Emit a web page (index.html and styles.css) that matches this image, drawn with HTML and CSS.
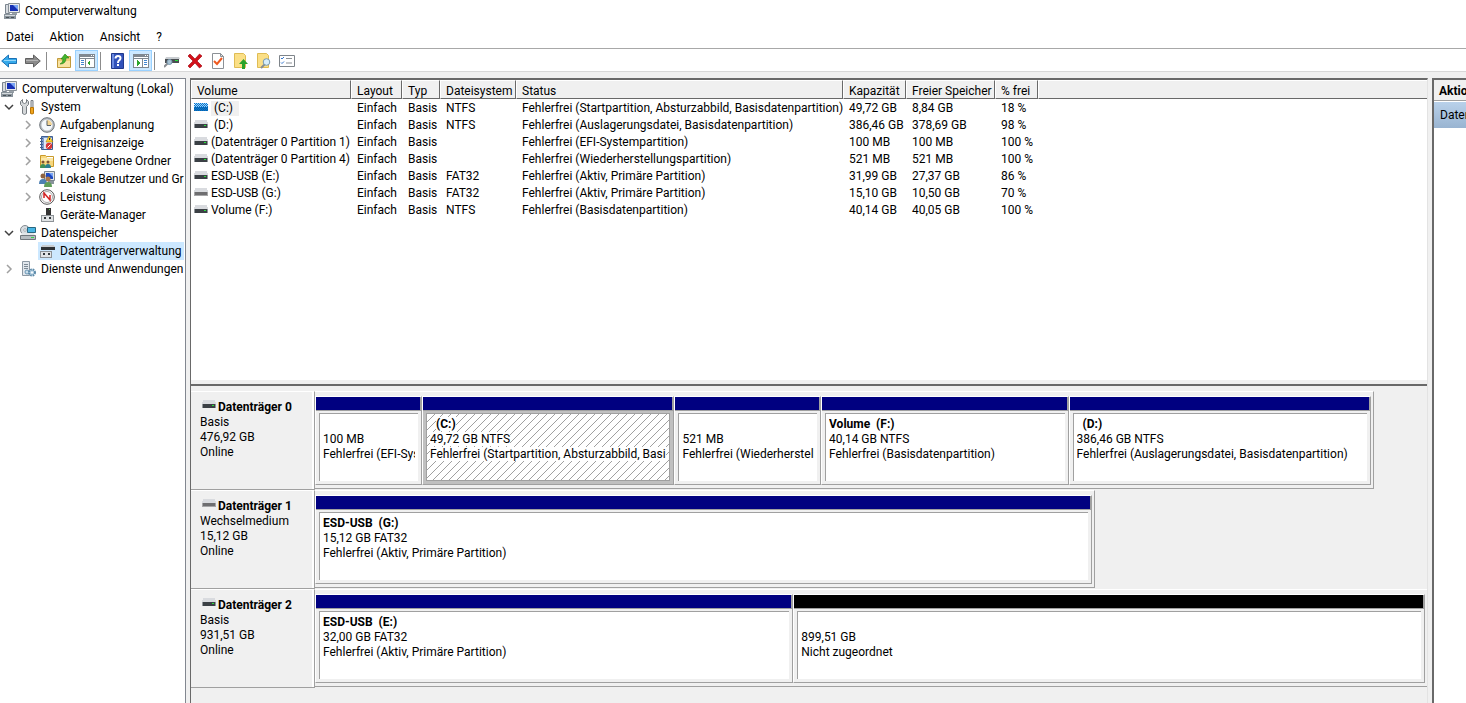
FILE: index.html
```html
<!DOCTYPE html>
<html lang="de">
<head>
  <title>Computerverwaltung</title>
  <meta charset="utf-8">
  <meta name="viewport" content="width=device-width, initial-scale=1">
  <link rel="stylesheet" href="styles.css">
</head>
<body>
  <svg class="sprite" xmlns="http://www.w3.org/2000/svg" aria-hidden="true">
    <symbol id="computer" viewBox="0 0 16 16">
      <path fill="#d7dbe0" stroke="#7b858f" d="M1.500 1.500h4v9h-4z"/>
      <path fill="#e8eaed" stroke="#8a9299" d="M4.500 .5h11v9h-11z"/>
      <path fill="#1730b4" d="M6 2h8v6H6z"/>
      <path fill="#7aa5f5" d="M9 2h5v5z"/>
      <path fill="#9aa2aa" d="M8 10h5v2H8z"/>
      <path fill="#8a949c" d="M0 11h12v5H0z"/>
      <path fill="#d5dadd" d="M1 12h10v1H1z"/>
      <path fill="#4a5258" d="M2 14h3v1H2zM7 14h3v1H7z"/>
    </symbol>
    <symbol id="tools" viewBox="0 0 16 16">
      <path fill="#d5d8da" stroke="#777d82" d="M2.500 .5v3l2 1 2-1v-3l2 2v3l-2 2v7q-2 2-4 0v-7l-2-2v-3z"/>
      <path fill="#e2e4e6" stroke="#777d82" d="M11 1.500h2v7h-2z"/>
      <path fill="#f0a51c" stroke="#b87406" d="M10.500 8.500h3v6q-1.500 1-3 0z"/>
    </symbol>
    <symbol id="clock" viewBox="0 0 16 16">
      <circle cx="8" cy="8" r="7.300" fill="#b9bec3" stroke="#6d747a"/>
      <circle cx="8" cy="8" r="5.500" fill="#f4f8fc"/>
      <path fill="#f3d493" d="M8 8V3a5 5 0 0 1 5 5z"/>
      <path fill="none" stroke="#5b6268" d="M8 3.500V8.500h4"/>
    </symbol>
    <symbol id="events" viewBox="0 0 16 16">
      <path fill="#7f9fd0" stroke="#405f92" d="M2.500 1.500h11v13h-11z"/>
      <path fill="#dfe9f7" d="M5 3h8v11H5z"/>
      <path stroke="#405f92" d="M1 3.500h3M1 6.500h3M1 9.500h3M1 12.500h3"/>
      <path fill="#ffd42e" stroke="#a98100" stroke-width=".6" d="m10 1 4 6H7z"/>
      <path stroke="#333" d="M10.500 3v2"/>
      <circle cx="10" cy="11" r="3.200" fill="#d93636"/>
      <path stroke="#fff" d="m8.500 12.500 3-3"/>
    </symbol>
    <symbol id="shared" viewBox="0 0 16 16">
      <path fill="#f7d77c" stroke="#c99a2a" d="M1.500 2.500h5l1 1h7v10h-13z"/>
      <path fill="#fbe7a8" d="M2 5h12v3H2z"/>
      <path fill="#fff" d="M8 4h6v1H8z"/>
      <circle cx="4" cy="9" r="1.500" fill="#7a5236"/>
      <circle cx="9" cy="9" r="1.500" fill="#7a5236"/>
      <path fill="#3f8f57" d="M1 15q0-4 3-4t3 4z"/>
      <path fill="#2b7f91" d="M6 15q0-4 3-4t3 4z"/>
    </symbol>
    <symbol id="users" viewBox="0 0 16 16">
      <path fill="#dfe3e8" stroke="#79838d" d="M5.500 .5h10v9h-10z"/>
      <path fill="#1c49c2" d="M7 2h7v6H7z"/>
      <path fill="#7aa5f5" d="M10 2h4v4z"/>
      <path fill="#8a949c" d="M9 10h6v3H9z"/>
      <circle cx="4" cy="5" r="2.500" fill="#8f633f"/>
      <circle cx="9" cy="8" r="2.500" fill="#a9774d"/>
      <path fill="#4d80b3" d="M0 13q0-5 4-5t4 5z"/>
      <path fill="#5f9e58" d="M5 16q0-5 4-5t4 5z"/>
    </symbol>
    <symbol id="gauge" viewBox="0 0 16 16">
      <circle cx="8" cy="8" r="7.300" fill="#fff" stroke="#555"/>
      <circle cx="8" cy="8" r="5.500" fill="none" stroke="#aaa"/>
      <path fill="none" stroke="#d32222" stroke-width="1.500" d="M5 9V4l6 7V6"/>
    </symbol>
    <symbol id="device" viewBox="0 0 16 16" shape-rendering="crispEdges">
      <path fill="#333" d="M7 1h5v8H7z"/>
      <path fill="#51d24a" d="M10 2h1v1h-1z"/>
      <path fill="#8d9297" d="M2 8h13v7H2z"/>
      <path fill="#dfe2e4" d="M3 9h11v5H3z"/>
      <path fill="#33383c" d="M5 10h2v2H5zM10 10h2v2h-2z"/>
    </symbol>
    <symbol id="storage" viewBox="0 0 16 16">
      <circle cx="5" cy="5" r="4.500" fill="#d8dde2" stroke="#82898f"/>
      <circle cx="5" cy="5" r="1.300" fill="#fff" stroke="#82898f" stroke-width=".6"/>
      <path fill="#48b5e4" stroke="#29677f" d="M7.500 2.500h8v5h-8z"/>
      <path fill="#e2e6e9" d="M2 8h12l1 3H1z"/>
      <path fill="#b6bcc1" stroke="#70777d" d="M.5 10.500h15v4H.5z"/>
      <path fill="#35d54a" d="M11 12h3v1h-3z"/>
    </symbol>
    <symbol id="diskmgmt" viewBox="0 0 16 16" shape-rendering="crispEdges">
      <path fill="#c9cdd0" d="M3 2h12l1 2H2z"/>
      <path fill="#2e3235" d="M2 4h14v3H2z"/>
      <path fill="#8d9297" d="M1 8h12v7H1z"/>
      <path fill="#e2e4e6" d="M2 9h10v5H2z"/>
      <path fill="#33383c" d="M4 10h2v2H4zM9 10h2v2H9z"/>
    </symbol>
    <symbol id="services" viewBox="0 0 16 16">
      <path fill="#e1e7ed" stroke="#8c98a3" d="M2.500 .5h7v14h-7z"/>
      <path stroke="#7c8994" d="M4 3.500h4M4 5.500h4M4 7.500h4"/>
      <circle cx="7" cy="11" r="2" fill="#c9ddea" stroke="#6c98b6"/>
      <circle cx="12" cy="11.500" r="3" fill="#b7d2e4" stroke="#5c8aa9" stroke-width="2" stroke-dasharray="1.600 .8"/>
      <circle cx="12" cy="11.500" r="1" fill="#fff"/>
    </symbol>
    <symbol id="drive" viewBox="0 0 14 8" shape-rendering="crispEdges">
      <path fill="#d9dbdf" d="M1 0h12l1 4H0z"/>
      <path fill="#3b4045" d="M0 4h14v4H0z"/>
      <path fill="#92979b" d="M0 4h1v4H0zM13 4h1v4h-1z"/>
      <path fill="#27e33a" d="M10 5h2v1h-2z"/>
    </symbol>
    <symbol id="drive-usb" viewBox="0 0 14 8" shape-rendering="crispEdges">
      <path fill="#d9dbdf" d="M1 0h12l1 4H0z"/>
      <path fill="#6e6e70" d="M0 4h14v4H0z"/>
      <path fill="#a5a5a7" d="M0 4h1v4H0zM13 4h1v4h-1zM0 7h14v1H0z"/>
    </symbol>
    <symbol id="drive-active" viewBox="0 0 14 8" shape-rendering="crispEdges">
      <path fill="#a4d0f0" d="M1 0h12l1 4H0z"/>
      <path fill="#12609f" d="M0 4h14v4H0z"/>
      <path stroke="#0078d7" stroke-dasharray="1 1" d="M0 .5h14M1 1.500h13M0 2.500h14M1 3.500h13M0 4.500h14M1 5.500h13M0 6.500h14M1 7.500h13"/>
    </symbol>
    <symbol id="back" viewBox="0 0 16 16">
      <path fill="#35a9ea" stroke="#1b71b5" d="M.7 8 7.500 2v3.500h8v5h-8V14z"/>
      <path stroke="#94d6fa" d="M3 7.500h12"/>
    </symbol>
    <symbol id="forward" viewBox="0 0 16 16">
      <path fill="#8b8b8b" stroke="#606060" d="M15.300 8 8.500 2v3.500h-8v5h8V14z"/>
      <path stroke="#b5b5b5" d="M1 7.500h12"/>
    </symbol>
    <symbol id="folder-up" viewBox="0 0 16 16">
      <path fill="#efcf78" stroke="#c19a3c" d="M1.500 5.500h6l1-2h6v11h-13z"/>
      <path fill="#f9e3a1" d="M2 8h12v6H2z"/>
      <path fill="#45b52d" stroke="#238014" stroke-width=".6" d="M4 11q3-1 3-5H5l4-5 4 4h-3q0 6-6 6z"/>
    </symbol>
    <symbol id="window-left" viewBox="0 0 16 14" shape-rendering="crispEdges">
      <path fill="#fff" stroke="#808890" d="M.5.5h15v13H.5z"/>
      <path fill="#808890" d="M1 1h14v2H1zM1 4h14v1H1zM6 5h1v8H6z"/>
      <path fill="#fff" d="M12 1h1v1h-1zM14 1h1v1h-1z"/>
      <path fill="#4386d0" d="M2 6h3v1H2zM2 8h3v1H2zM2 10h3v1H2z"/>
      <path fill="#2da52a" d="M11 6v6L8 9z"/>
    </symbol>
    <symbol id="window-right" viewBox="0 0 16 14" shape-rendering="crispEdges">
      <path fill="#fff" stroke="#808890" d="M.5.5h15v13H.5z"/>
      <path fill="#808890" d="M1 1h14v2H1zM1 4h14v1H1zM9 5h1v8H9z"/>
      <path fill="#fff" d="M12 1h1v1h-1zM14 1h1v1h-1z"/>
      <path fill="#4386d0" d="M11 6h3v1h-3zM11 8h3v1h-3zM11 10h3v1h-3z"/>
      <path fill="#2da52a" d="M4 6v6l3-3z"/>
    </symbol>
    <symbol id="help" viewBox="0 0 16 16">
      <path fill="#3152ba" stroke="#20398c" d="M1.500 .5h12v15h-12z"/>
      <path fill="#6c8be0" d="M2 1h2v14H2z"/>
      <path fill="none" stroke="#fff" stroke-width="2" d="M5.500 5.500q0-2.500 2.500-2.500t2.500 2.300q0 1.400-1.500 2.200-1 .6-1 2.500"/>
      <path fill="#fff" d="M7 11h2v2H7z"/>
    </symbol>
    <symbol id="scan" viewBox="0 0 16 16">
      <path fill="#c9cdd1" d="M2 4h13l1 2H1z"/>
      <path fill="#4a4e52" d="M1 6h14v4H1z"/>
      <path fill="#27e33a" d="M11 7h3v1h-3z"/>
      <path stroke="#8b8f93" stroke-width="2" d="m0 14 4-4"/>
      <circle cx="5.500" cy="9" r="2.500" fill="#a9c3d4" stroke="#7796ac"/>
    </symbol>
    <symbol id="delete" viewBox="0 0 16 16">
      <path fill="#d3101a" stroke="#9b0008" stroke-width=".6" d="M1 3 3 1 8 6 12.500 1 15 3l-5 5 5 5-2.500 2L8 10 3 15 1 13l5-5z"/>
    </symbol>
    <symbol id="check" viewBox="0 0 16 16">
      <path fill="#fff" stroke="#8c9196" d="M2.500 .5h8l3 3v12h-11z"/>
      <path fill="#dfe2e4" stroke="#8c9196" d="M10.500 .5v3h3z"/>
      <path fill="none" stroke="#ee5a20" stroke-width="2" d="m4 8 3 3 5-6"/>
    </symbol>
    <symbol id="new-up" viewBox="0 0 16 16">
      <path fill="#fbdf86" stroke="#dfbc54" d="M1.500 .5h9l2 2v12h-11z"/>
      <path fill="#2aa32b" d="m10.500 6 4.500 5h-3v5H9v-5H6z"/>
    </symbol>
    <symbol id="search" viewBox="0 0 16 16">
      <path fill="#fbdf86" stroke="#dfbc54" d="M1.500 .5h9l2 2v12h-11z"/>
      <path stroke="#868c91" stroke-width="2" d="m5 15 4-4"/>
      <circle cx="10.500" cy="9" r="3.300" fill="#d7edf9" stroke="#7599b0"/>
    </symbol>
    <symbol id="list" viewBox="0 0 16 16">
      <path fill="#fff" stroke="#7e848a" d="M.5 2.500h15v11H.5z"/>
      <path fill="none" stroke="#3577cf" d="m2 5 1 1 2-2M2 9.500l1 1 2-2"/>
      <path stroke="#8b9096" d="M7 5.500h6M7 10h6"/>
    </symbol>
    <symbol id="closed" viewBox="0 0 10 10">
      <path fill="none" stroke="#a0a0a0" stroke-width="1.500" d="m3 1 4 4-4 4"/>
    </symbol>
    <symbol id="opened" viewBox="0 0 10 10">
      <path fill="none" stroke="#404040" stroke-width="1.500" d="m1 3 4 4 4-4"/>
    </symbol>
  </svg>

  <header class="titlebar">
    <svg class="icon"><use href="#computer"/></svg>
    <h1 class="title">Computerverwaltung</h1>
  </header>

  <nav class="menu">
    <button class="menu-item">Datei</button>
    <button class="menu-item">Aktion</button>
    <button class="menu-item">Ansicht</button>
    <button class="menu-item">?</button>
  </nav>

  <div class="toolbar">
    <button class="tool" aria-label="Zurück"><svg class="icon"><use href="#back"/></svg></button>
    <button class="tool" aria-label="Vorwärts"><svg class="icon"><use href="#forward"/></svg></button>
    <span class="separator"></span>
    <button class="tool" aria-label="Nach oben"><svg class="icon"><use href="#folder-up"/></svg></button>
    <button class="tool tool-pressed" aria-label="Konsolenstruktur" aria-pressed="true"><svg class="icon"><use href="#window-left"/></svg></button>
    <span class="separator"></span>
    <button class="tool" aria-label="Hilfe"><svg class="icon"><use href="#help"/></svg></button>
    <button class="tool tool-pressed" aria-label="Aktionsbereich" aria-pressed="true"><svg class="icon"><use href="#window-right"/></svg></button>
    <span class="separator"></span>
    <button class="tool" aria-label="Datenträger neu einlesen"><svg class="icon"><use href="#scan"/></svg></button>
    <button class="tool" aria-label="Löschen"><svg class="icon"><use href="#delete"/></svg></button>
    <button class="tool" aria-label="Eigenschaften"><svg class="icon"><use href="#check"/></svg></button>
    <button class="tool" aria-label="Öffnen"><svg class="icon"><use href="#new-up"/></svg></button>
    <button class="tool" aria-label="Durchsuchen"><svg class="icon"><use href="#search"/></svg></button>
    <button class="tool" aria-label="Liste"><svg class="icon"><use href="#list"/></svg></button>
  </div>

  <main class="panes">
    <aside class="tree">
      <div class="node node-root"><svg class="icon"><use href="#computer"/></svg><span>Computerverwaltung (Lokal)</span></div>
      <ul class="branch">
        <li>
          <div class="node"><button class="toggle" aria-label="System" aria-expanded="true"><svg><use href="#opened"/></svg></button><svg class="icon"><use href="#tools"/></svg><span>System</span></div>
          <ul class="branch branch-inner">
            <li class="node"><button class="toggle" aria-label="Aufgabenplanung" aria-expanded="false"><svg><use href="#closed"/></svg></button><svg class="icon"><use href="#clock"/></svg><span>Aufgabenplanung</span></li>
            <li class="node"><button class="toggle" aria-label="Ereignisanzeige" aria-expanded="false"><svg><use href="#closed"/></svg></button><svg class="icon"><use href="#events"/></svg><span>Ereignisanzeige</span></li>
            <li class="node"><button class="toggle" aria-label="Freigegebene Ordner" aria-expanded="false"><svg><use href="#closed"/></svg></button><svg class="icon"><use href="#shared"/></svg><span>Freigegebene Ordner</span></li>
            <li class="node"><button class="toggle" aria-label="Lokale Benutzer und Gruppen" aria-expanded="false"><svg><use href="#closed"/></svg></button><svg class="icon"><use href="#users"/></svg><span>Lokale Benutzer und Gruppen</span></li>
            <li class="node"><button class="toggle" aria-label="Leistung" aria-expanded="false"><svg><use href="#closed"/></svg></button><svg class="icon"><use href="#gauge"/></svg><span>Leistung</span></li>
            <li class="node node-leaf"><svg class="icon"><use href="#device"/></svg><span>Geräte-Manager</span></li>
          </ul>
        </li>
        <li>
          <div class="node"><button class="toggle" aria-label="Datenspeicher" aria-expanded="true"><svg><use href="#opened"/></svg></button><svg class="icon"><use href="#storage"/></svg><span>Datenspeicher</span></div>
          <ul class="branch branch-inner">
            <li class="node node-leaf node-selected"><svg class="icon"><use href="#diskmgmt"/></svg><span>Datenträgerverwaltung</span></li>
          </ul>
        </li>
        <li class="node"><button class="toggle" aria-label="Dienste und Anwendungen" aria-expanded="false"><svg><use href="#closed"/></svg></button><svg class="icon"><use href="#services"/></svg><span>Dienste und Anwendungen</span></li>
      </ul>
    </aside>

    <section class="content">
      <div class="volumes">
        <table class="table">
          <colgroup>
            <col class="col-volume">
            <col class="col-layout">
            <col class="col-type">
            <col class="col-fs">
            <col class="col-status">
            <col class="col-capacity">
            <col class="col-free">
            <col class="col-percent">
            <col>
          </colgroup>
          <thead>
            <tr>
              <th>Volume</th><th>Layout</th><th>Typ</th><th>Dateisystem</th><th>Status</th><th>Kapazität</th><th>Freier Speicher</th><th>% frei</th><th></th>
            </tr>
          </thead>
          <tbody>
            <tr>
              <td><svg class="drive"><use href="#drive-active"/></svg><span class="letter letter-active">(C:)</span></td>
              <td>Einfach</td><td>Basis</td><td>NTFS</td><td>Fehlerfrei (Startpartition, Absturzabbild, Basisdatenpartition)</td><td>49,72 GB</td><td>8,84 GB</td><td>18 %</td><td></td>
            </tr>
            <tr>
              <td><svg class="drive"><use href="#drive"/></svg><span class="letter">(D:)</span></td>
              <td>Einfach</td><td>Basis</td><td>NTFS</td><td>Fehlerfrei (Auslagerungsdatei, Basisdatenpartition)</td><td>386,46 GB</td><td>378,69 GB</td><td>98 %</td><td></td>
            </tr>
            <tr>
              <td><svg class="drive"><use href="#drive"/></svg>(Datenträger 0 Partition 1)</td>
              <td>Einfach</td><td>Basis</td><td></td><td>Fehlerfrei (EFI-Systempartition)</td><td>100 MB</td><td>100 MB</td><td>100 %</td><td></td>
            </tr>
            <tr>
              <td><svg class="drive"><use href="#drive"/></svg>(Datenträger 0 Partition 4)</td>
              <td>Einfach</td><td>Basis</td><td></td><td>Fehlerfrei (Wiederherstellungspartition)</td><td>521 MB</td><td>521 MB</td><td>100 %</td><td></td>
            </tr>
            <tr>
              <td><svg class="drive"><use href="#drive"/></svg>ESD-USB (E:)</td>
              <td>Einfach</td><td>Basis</td><td>FAT32</td><td>Fehlerfrei (Aktiv, Primäre Partition)</td><td>31,99 GB</td><td>27,37 GB</td><td>86 %</td><td></td>
            </tr>
            <tr>
              <td><svg class="drive"><use href="#drive-usb"/></svg>ESD-USB (G:)</td>
              <td>Einfach</td><td>Basis</td><td>FAT32</td><td>Fehlerfrei (Aktiv, Primäre Partition)</td><td>15,10 GB</td><td>10,50 GB</td><td>70 %</td><td></td>
            </tr>
            <tr>
              <td><svg class="drive"><use href="#drive"/></svg>Volume (F:)</td>
              <td>Einfach</td><td>Basis</td><td>NTFS</td><td>Fehlerfrei (Basisdatenpartition)</td><td>40,14 GB</td><td>40,05 GB</td><td>100 %</td><td></td>
            </tr>
          </tbody>
        </table>
      </div>
      <div class="splitter"></div>

      <div class="disks">
        <article class="disk">
          <div class="disk-info">
            <h2 class="disk-name"><svg class="drive"><use href="#drive"/></svg>Datenträger 0</h2>
            <p>Basis</p>
            <p>476,92 GB</p>
            <p>Online</p>
          </div>
          <div class="disk-map">
            <div class="partitions" style="width: 95.2%">
              <div class="partition" style="flex-grow: 106">
                <div class="bar"></div>
                <div class="box"><p class="name"></p><p>100 MB</p><p>Fehlerfrei (EFI-Systempartition)</p></div>
              </div>
              <div class="partition partition-selected" style="flex-grow: 253">
                <div class="bar"></div>
                <div class="box"><p class="name name-letter"><span>(C:)</span></p><p><span>49,72 GB NTFS</span></p><p><span>Fehlerfrei (Startpartition, Absturzabbild, Basisdatenpartition)</span></p></div>
              </div>
              <div class="partition" style="flex-grow: 146">
                <div class="bar"></div>
                <div class="box"><p class="name"></p><p>521 MB</p><p>Fehlerfrei (Wiederherstellungspartition)</p></div>
              </div>
              <div class="partition" style="flex-grow: 248">
                <div class="bar"></div>
                <div class="box"><p class="name">Volume&nbsp; (F:)</p><p>40,14 GB NTFS</p><p>Fehlerfrei (Basisdatenpartition)</p></div>
              </div>
              <div class="partition" style="flex-grow: 303">
                <div class="bar"></div>
                <div class="box"><p class="name name-letter">(D:)</p><p>386,46 GB NTFS</p><p>Fehlerfrei (Auslagerungsdatei, Basisdatenpartition)</p></div>
              </div>
            </div>
          </div>
        </article>

        <article class="disk">
          <div class="disk-info">
            <h2 class="disk-name"><svg class="drive"><use href="#drive-usb"/></svg>Datenträger 1</h2>
            <p>Wechselmedium</p>
            <p>15,12 GB</p>
            <p>Online</p>
          </div>
          <div class="disk-map">
            <div class="partitions" style="width: 70.1%">
              <div class="partition" style="flex-grow: 1">
                <div class="bar"></div>
                <div class="box"><p class="name">ESD-USB&nbsp; (G:)</p><p>15,12 GB FAT32</p><p>Fehlerfrei (Aktiv, Primäre Partition)</p></div>
              </div>
            </div>
          </div>
        </article>

        <article class="disk">
          <div class="disk-info">
            <h2 class="disk-name"><svg class="drive"><use href="#drive"/></svg>Datenträger 2</h2>
            <p>Basis</p>
            <p>931,51 GB</p>
            <p>Online</p>
          </div>
          <div class="disk-map">
            <div class="partitions partitions-full">
              <div class="partition" style="flex-grow: 478">
                <div class="bar"></div>
                <div class="box"><p class="name">ESD-USB&nbsp; (E:)</p><p>32,00 GB FAT32</p><p>Fehlerfrei (Aktiv, Primäre Partition)</p></div>
              </div>
              <div class="partition" style="flex-grow: 632">
                <div class="bar bar-free"></div>
                <div class="box"><p class="name"></p><p>899,51 GB</p><p>Nicht zugeordnet</p></div>
              </div>
            </div>
          </div>
        </article>
      </div>
    </section>

    <aside class="actions">
      <h2 class="actions-title">Aktionen</h2>
      <p class="actions-group">Datenträgerverwaltung</p>
    </aside>
  </main>
</body>
</html>
```
FILE: styles.css
```css
*, *::before, *::after {
  margin: 0;
  padding: 0;
  box-sizing: border-box;
}

body {
  display: flex;
  flex-direction: column;
  height: 100vh;
  overflow: hidden;
  background-color: #FFFFFF;
  color: #000000;
  font-family: "Segoe UI", Roboto, sans-serif;
  font-size: 12px;
  line-height: 15px;
  white-space: nowrap;
}

button {
  border: none;
  background: none;
  color: inherit;
  font: inherit;
}

.sprite {
  display: none;
}

.icon {
  flex: none;
  width: 16px;
  height: 16px;
}

.drive {
  flex: none;
  width: 14px;
  height: 8px;
}

/* Kopfbereich */

.titlebar {
  display: flex;
  align-items: center;
  gap: 5px;
  height: 22px;
  padding-left: 4px;
}

.title {
  font-size: 12px;
  font-weight: 400;
}

.menu {
  display: flex;
  height: 26px;
  padding-top: 4px;
}

.menu-item {
  padding: 0 10px 0 6px;
}

.toolbar {
  display: flex;
  height: 24px;
  padding-top: 1px;
  border-top: 1px solid #A8A8A8;
  border-bottom: 1px solid #D8D8D8;
}

.tool {
  display: flex;
  align-items: center;
  justify-content: center;
  width: 23px;
}

.tool:first-child {
  justify-content: flex-start;
  width: 21px;
  padding-left: 1px;
}

.tool:hover {
  background-color: #E5F3FF;
}

.tool-pressed {
  border: 1px solid #99D1FF;
  background-color: #CCE8FF;
}

.separator {
  width: 6px;
  margin: 2px 0 1px 2px;
  border-left: 1px solid #8C8C8C;
}

/* Bereiche */

.panes {
  flex: 1;
  display: grid;
  grid-template-columns: 186px minmax(0, 1fr) 34px;
  gap: 4px;
  min-height: 0;
  padding-top: 6px;
  background-color: #F0F0F0;
}

.tree {
  overflow: hidden;
  padding-right: 1px;
  border-top: 1px solid #828790;
  border-right: 1px solid #828790;
  background-color: #FFFFFF;
}

.branch {
  list-style: none;
}

.branch-inner {
  padding-left: 19px;
}

.node {
  display: flex;
  align-items: center;
  gap: 5px;
  height: 18px;
  overflow: hidden;
}

.node-root {
  margin-top: 1px;
  padding-left: 1px;
}

.node-leaf {
  margin-left: 19px;
  padding-left: 1px;
}

.node-selected {
  background-color: #CCE8FF;
}

.toggle {
  flex: none;
  width: 15px;
  height: 18px;
  padding-left: 4px;
}

.toggle svg {
  display: block;
  width: 10px;
  height: 10px;
}

.content {
  display: flex;
  flex-direction: column;
  border-top: 2px solid #696969;
  border-left: 1px solid #696969;
  border-right: 1px solid #E3E3E3;
}

.volumes {
  height: 300px;
  background-color: #FFFFFF;
}

.table {
  width: 100%;
  table-layout: fixed;
  border-spacing: 0;
}

.col-volume { width: 160px; }
.col-layout { width: 51px; }
.col-type { width: 38px; }
.col-fs { width: 76px; }
.col-status { width: 327px; }
.col-capacity { width: 63px; }
.col-free { width: 89px; }
.col-percent { width: 43px; }

.table th {
  height: 19px;
  padding: 2px 0 0 5px;
  border-top: 1px solid #FFFFFF;
  border-left: 1px solid #FFFFFF;
  border-right: 1px solid #696969;
  border-bottom: 1px solid #696969;
  background-color: #F0F0F0;
  font-weight: 400;
  line-height: 14px;
  text-align: left;
}

.table th:last-child {
  border-right: none;
}

.table td {
  height: 17px;
  padding: 2px 0 0 6px;
}

.table td:first-child {
  padding-left: 3px;
}

.table .drive {
  margin-right: 3px;
  vertical-align: 1px;
}

.letter {
  display: inline-block;
  padding: 0 6px 0 3px;
}

.letter-active {
  background-color: #F0F0F0;
}

.splitter {
  height: 6px;
  border-top: 2px solid #F0F0F0;
  border-bottom: 2px solid #696969;
  background-color: #F0F0F0;
}

/* Grafische Ansicht */

.disks {
  flex: 1;
  padding-top: 5px;
}

.disk {
  display: flex;
  height: 99px;
}

.disk-info {
  flex: none;
  width: 124px;
  padding: 8px 0 0 9px;
  border-top: 1px solid #FFFFFF;
  border-right: 1px solid #A0A0A0;
  border-bottom: 1px solid #A0A0A0;
  box-shadow: inset -2px 0 #FFFFFF;
}

.disk-name {
  display: flex;
  gap: 2px;
  padding-left: 2px;
  font-size: 12px;
  font-weight: 700;
}

.disk-map {
  flex: 1;
  min-width: 0;
}

.partitions {
  display: flex;
  height: 98px;
  padding: 4px 2px 3px 0;
  border-top: 1px solid #FFFFFF;
  border-right: 1px solid #A0A0A0;
  border-bottom: 1px solid #A0A0A0;
}

.partitions-full {
  border-right: none;
}

.partition {
  display: flex;
  flex-direction: column;
  flex-basis: 0;
  min-width: 0;
  border-top: 1px solid #FFFFFF;
  border-left: 1px solid #FFFFFF;
  border-right: 1px solid #A0A0A0;
  border-bottom: 1px solid #A0A0A0;
}

.bar {
  flex: none;
  height: 14px;
  border-right: 1px solid #A0A0A0;
  border-bottom: 1px solid #A0A0A0;
  background-color: #000080;
}

.bar-free {
  background-color: #000000;
}

.box {
  flex: 1;
  margin: 2px 3px 3px;
  padding: 3px;
  overflow: hidden;
  border-top: 1px solid #A0A0A0;
  border-left: 1px solid #A0A0A0;
  background-color: #FFFFFF;
}

.box p {
  height: 15px;
  overflow: hidden;
}

.box .name {
  font-weight: 700;
}

.box .name-letter {
  padding-left: 6px;
}

.partition-selected {
  background-color: #C0C0C0;
}

.partition-selected .box {
  border: 1px solid #A0A0A0;
  background-color: #FFFFFF;
  background-image: linear-gradient(135deg, transparent 47%, #A0A0A0 47%, #A0A0A0 52%, transparent 52%);
  background-size: 8px 8px;
}

.partition-selected span {
  background-color: #FFFFFF;
}

/* Aktionen */

.actions {
  overflow: hidden;
  border-top: 2px solid #696969;
  border-left: 2px solid #696969;
  background-color: #FFFFFF;
}

.actions-title {
  height: 21px;
  padding: 4px 0 0 5px;
  border-bottom: 1px solid #A0A0A0;
  background-color: #F0F0F0;
  font-size: 12px;
  font-weight: 700;
}

.actions-group {
  height: 26px;
  margin-top: 1px;
  padding: 6px 0 0 6px;
  background-image: linear-gradient(#B9D1EA, #99B4D1);
}
```
